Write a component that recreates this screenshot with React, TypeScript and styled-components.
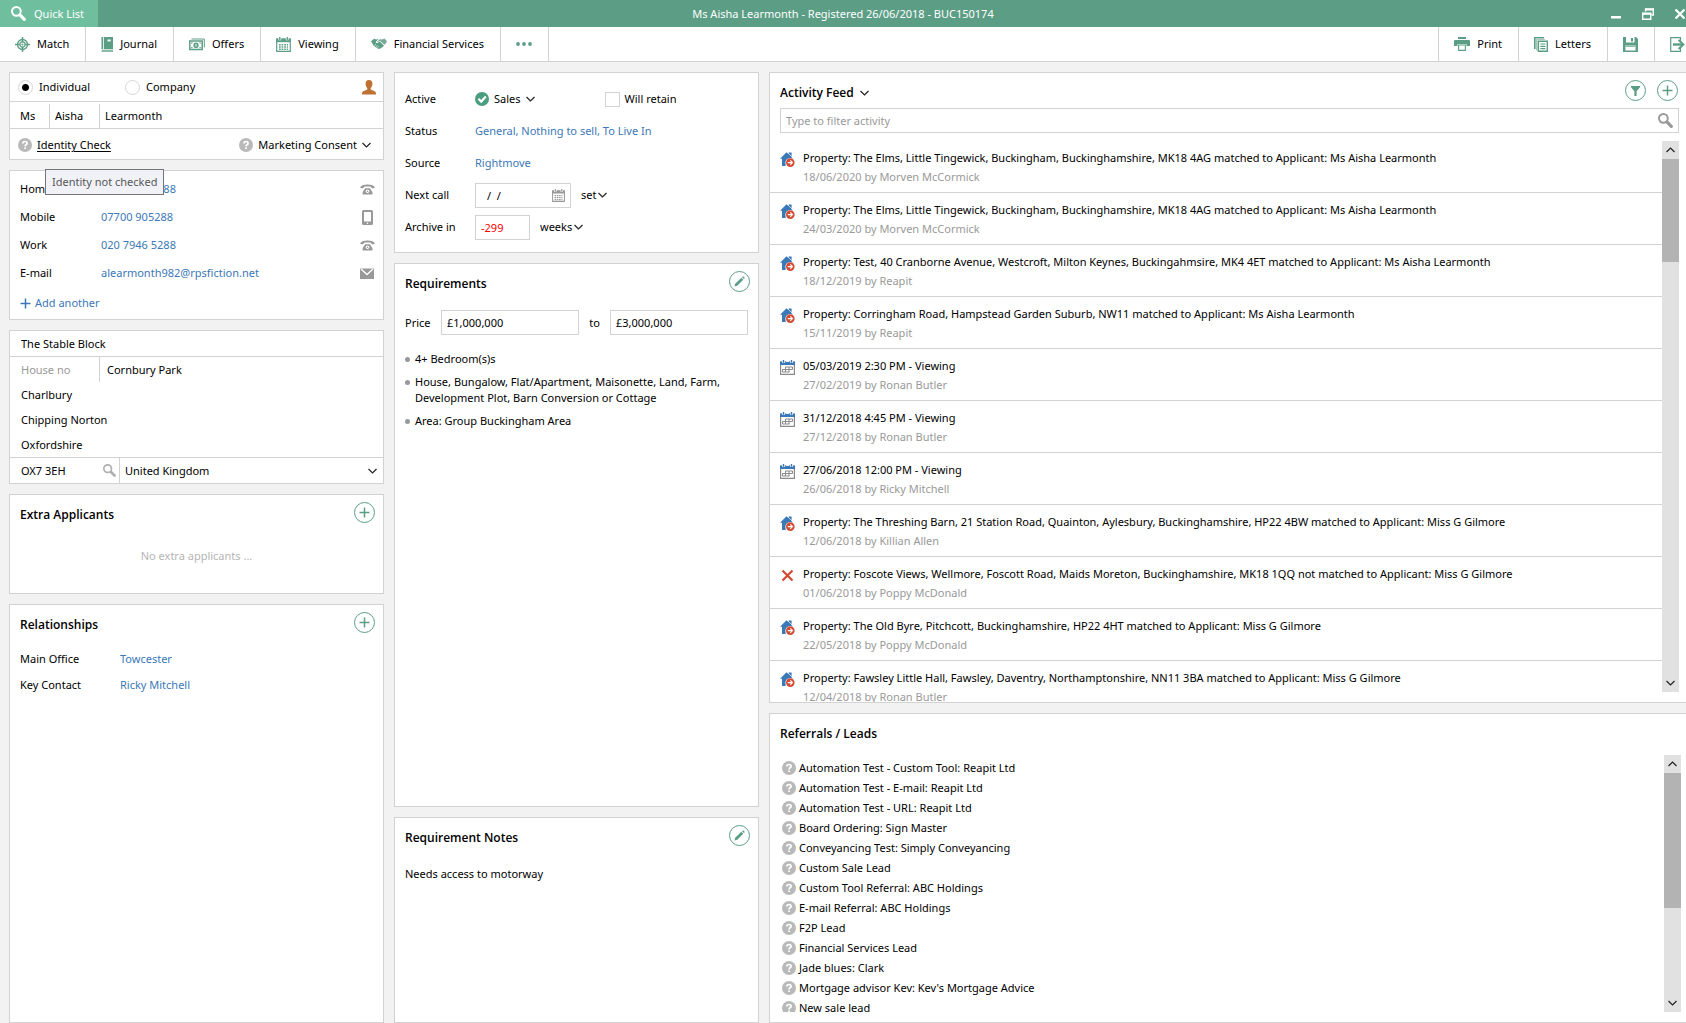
import React, { useRef } from 'react';
import styled, { createGlobalStyle, css } from 'styled-components';

const green = '#5c9e85';
const line = '#d2d2d2';
const blue = '#3b78b8';
const grey = '#999999';

const GlobalStyle = createGlobalStyle`
  *, *::before, *::after { box-sizing: border-box; }
  body {
    margin: 0;
    background: #f2f2f2;
    color: #000;
    font-family: "Noto Sans", "Open Sans", sans-serif;
    font-size: 11px;
    line-height: 16px;
  }
  button, input, select { font: inherit; color: inherit; }
  svg { display: block; flex: none; }
`;

/* ---------- page frame ---------- */

const Page = styled.div`
  display: flex;
  flex-direction: column;
  height: 100vh;
  overflow: hidden;
`;

const plainButton = css`
  display: inline-flex;
  align-items: center;
  margin: 0;
  padding: 0;
  border: 0;
  background: none;
  cursor: pointer;
`;

const TitleBar = styled.header`
  display: grid;
  grid-template-columns: 1fr auto 1fr;
  align-items: center;
  flex: none;
  height: 27px;
  background: ${green};
  color: #fff;
`;

const QuickList = styled.button`
  ${plainButton}
  justify-self: start;
  gap: 8px;
  height: 27px;
  padding: 0 14px 0 11px;
  background: #6fbf9f;
`;

const WindowTitle = styled.h1`
  margin: 0;
  font-size: 11px;
  font-weight: 400;
`;

const WindowControls = styled.div`
  display: flex;
  justify-content: flex-end;
  gap: 20px;
`;

const WindowButton = styled.button`
  ${plainButton}
`;

const Toolbar = styled.nav`
  display: flex;
  flex: none;
  height: 35px;
  background: #fff;
  border-bottom: 1px solid ${line};
`;

const ToolButton = styled.button`
  ${plainButton}
  gap: 7px;
  padding: 0 16px 0 15px;
  border-right: 1px solid ${line};
  white-space: nowrap;
`;

const ToolbarEnd = styled.div`
  display: flex;
  margin-left: auto;
  border-left: 1px solid ${line};
`;

const ExitButton = styled.button`
  ${plainButton}
  padding-left: 15px;
`;

const Columns = styled.main`
  display: grid;
  grid-template-columns: minmax(300px, 375fr) minmax(300px, 365fr) minmax(0, 917fr);
  gap: 10px;
  flex: 1;
  min-height: 0;
  padding: 10px 0 0 9px;
`;

const Column = styled.div`
  display: flex;
  flex-direction: column;
  gap: 10px;
  min-width: 0;
  min-height: 0;
`;

const Panel = styled.section<{ $grow?: number; $open?: boolean }>`
  display: flex;
  flex-direction: column;
  flex: ${p => (p.$grow ? `${p.$grow} 1 0` : 'none')};
  min-height: 0;
  position: relative;
  background: #fff;
  border: 1px solid ${line};
  border-right-width: ${p => (p.$open ? 0 : 1)}px;
`;

const PanelHead = styled.div`
  display: flex;
  align-items: center;
  gap: 11px;
  flex: none;
  height: 35px;
  padding: 0 8px 0 10px;
`;

const PanelTitle = styled.h2`
  display: flex;
  align-items: center;
  gap: 6px;
  margin: 0 auto 0 0;
  padding-top: 4px;
  font-family: "Open Sans", "Noto Sans", sans-serif;
  font-size: 12px;
  font-weight: 600;
`;

const RoundButton = styled.button`
  ${plainButton}
  justify-content: center;
  width: 21px;
  height: 21px;
  border: 1px solid ${green};
  border-radius: 50%;
  color: ${green};
`;

const Link = styled.a`
  color: ${blue};
  text-decoration: none;
`;

/* ---------- applicant ---------- */

const KindRow = styled.div`
  display: flex;
  align-items: center;
  height: 29px;
  padding: 0 7px 0 8px;
  border-bottom: 1px solid ${line};
`;

const Radio = styled.label`
  display: flex;
  align-items: center;
  gap: 6px;
  width: 107px;
  input {
    appearance: none;
    width: 15px;
    height: 15px;
    margin: 0;
    border: 1px solid #d6d6d6;
    border-radius: 50%;
    background: #fff;
  }
  input:checked { background: radial-gradient(circle, #000 3px, #fff 4px); }
`;

const Fill = styled.span`
  flex: 1;
`;

const NameRow = styled.div`
  display: flex;
  height: 27px;
  padding-top: 2px;
  border-bottom: 1px solid ${line};
  input { padding-bottom: 2px; }
`;

const BareInput = styled.input<{ $w?: number; $rule?: boolean; $pad?: number }>`
  ${p => (p.$w ? `width: ${p.$w}px;` : 'flex: 1;')}
  min-width: 0;
  height: 100%;
  padding: 0 5px 0 ${p => p.$pad ?? 5}px;
  border: 0;
  border-right: ${p => (p.$rule ? `1px solid ${line}` : '0')};
  background: none;
  outline: 0;
  &::placeholder { color: ${grey}; opacity: 1; }
`;

const CheckRow = styled.div`
  display: flex;
  align-items: center;
  justify-content: space-between;
  height: 30px;
  padding: 2px 12px 0 8px;
`;

const InlineButton = styled.button<{ $under?: boolean; $tight?: boolean }>`
  ${plainButton}
  gap: ${p => (p.$tight ? 2 : 5)}px;
  span { text-decoration: ${p => (p.$under ? 'underline' : 'none')}; text-underline-offset: 2px; }
`;

const Tooltip = styled.div`
  position: absolute;
  z-index: 2;
  left: 35px;
  top: 96px;
  height: 26px;
  padding: 4px 6px;
  border: 1px solid #767676;
  background: #f1f2f7;
  color: #575757;
  white-space: nowrap;
`;

const ContactList = styled.div`
  display: flex;
  flex-direction: column;
  padding: 4px 8px 0 10px;
`;

const ContactRow = styled.div`
  display: grid;
  grid-template-columns: 81px 1fr auto;
  align-items: center;
  height: 28px;
`;

const AddAnother = styled.button`
  ${plainButton}
  gap: 4px;
  height: 32px;
  color: ${blue};
`;

/* ---------- address ---------- */

const AddressLine = styled.div<{ $top?: boolean; $bottom?: boolean }>`
  display: flex;
  align-items: center;
  box-sizing: content-box;
  height: 25px;
  border-top: ${p => (p.$top ? `1px solid ${line}` : '0')};
  border-bottom: ${p => (p.$bottom ? `1px solid ${line}` : '0')};
`;

const Postcode = styled.div`
  display: flex;
  align-items: center;
  width: 110px;
  height: 100%;
  padding-right: 3px;
  border-right: 1px solid ${line};
`;

const SelectBox = styled.div`
  display: flex;
  align-items: center;
  flex: 1;
  padding-right: 6px;
  select {
    appearance: none;
    flex: 1;
    padding: 0 5px;
    border: 0;
    background: none;
    outline: 0;
  }
`;

const Empty = styled.p`
  margin: 0;
  padding: 18px 0 29px;
  text-align: center;
  color: #b5b5b5;
`;

const Pairs = styled.dl`
  display: grid;
  grid-template-columns: 100px 1fr;
  row-gap: 10px;
  margin: 0;
  padding: 11px 10px;
  dd { margin: 0; }
`;

/* ---------- status form ---------- */

const Form = styled.div`
  display: flex;
  flex-direction: column;
  padding: 10px 10px 9px;
`;

const FormRow = styled.div`
  display: grid;
  grid-template-columns: 70px auto 1fr;
  align-items: center;
  height: 32px;
`;

const FormTail = styled.div<{ $gap: number }>`
  padding-left: ${p => p.$gap}px;
`;

const boxed = css`
  height: 25px;
  border: 1px solid ${line};
  background: #fff;
`;

const DateBox = styled.div`
  ${boxed}
  display: flex;
  align-items: center;
  width: 96px;
  padding-right: 5px;
`;

const BoxInput = styled.input<{ $w?: number; $alert?: boolean }>`
  ${boxed}
  ${p => (p.$w ? `width: ${p.$w}px;` : 'flex: 1;')}
  min-width: 0;
  padding: 0 5px;
  outline: 0;
  color: ${p => (p.$alert ? '#ff0000' : 'inherit')};
`;

const Tick = styled.label`
  display: flex;
  align-items: center;
  gap: 5px;
  input {
    appearance: none;
    width: 15px;
    height: 15px;
    margin: 0;
    border: 1px solid ${line};
    background: #fff;
  }
`;

const PriceRow = styled.div`
  display: flex;
  align-items: center;
  gap: 10px;
  padding: 11px 10px 0;
  label { width: 26px; }
  label + input + span { width: 11px; text-align: center; }
`;

const Bullets = styled.ul`
  display: flex;
  flex-direction: column;
  gap: 7px;
  margin: 0;
  padding: 16px 10px;
  list-style: none;
  li { position: relative; padding-left: 10px; }
  li::before {
    content: "";
    position: absolute;
    left: 0;
    top: 6px;
    width: 5px;
    height: 5px;
    border-radius: 50%;
    background: ${grey};
  }
`;

const Note = styled.p`
  margin: 0;
  padding: 13px 10px;
`;

/* ---------- feed ---------- */

const FilterBox = styled.div`
  ${boxed}
  display: flex;
  flex: none;
  align-items: center;
  margin: 0 7px 0 10px;
  padding-right: 5px;
`;

const ScrollArea = styled.div<{ $top: number; $right: number; $bottom: number }>`
  display: flex;
  flex: 1;
  min-height: 0;
  padding: ${p => p.$top}px ${p => p.$right}px ${p => p.$bottom}px 0;
`;

const Feed = styled.ul<{ $inset?: number }>`
  flex: 1;
  min-width: 0;
  margin: 0;
  padding: ${p => p.$inset ?? 0}px 0 0;
  overflow: hidden;
  list-style: none;
`;

const FeedItem = styled.li`
  display: flex;
  gap: 8px;
  height: 52px;
  padding: 9px 0 0 10px;
  border-bottom: 1px solid ${line};
  svg { margin-top: 2px; }
`;

const FeedText = styled.div`
  display: flex;
  flex-direction: column;
  gap: 3px;
  white-space: nowrap;
  small { font-size: 11px; color: ${grey}; }
`;

const LeadItem = styled.li`
  display: flex;
  align-items: center;
  gap: 3px;
  height: 20px;
  padding-left: 12px;
`;

const Bar = styled.div<{ $lift?: boolean }>`
  display: flex;
  flex-direction: column;
  flex: none;
  width: 17px;
  margin-bottom: ${p => (p.$lift ? 10 : 0)}px;
  background: #e1e1e1;
`;

const BarButton = styled.button`
  ${plainButton}
  justify-content: center;
  flex: none;
  height: 18px;
`;

const Track = styled.div`
  flex: 1;
  min-height: 0;
`;

const Thumb = styled.div<{ $share: number }>`
  height: ${p => p.$share}%;
  background: #b3b3b3;
`;

/* ---------- icons ---------- */

const Chevron = ({ up = false, color = '#222' }: { up?: boolean; color?: string }) => (
  <svg width="9" height="6" viewBox="0 0 9 6" fill="none" stroke={color} strokeWidth="1.2">
    <path d={up ? 'M0.5 5 L4.5 1 L8.5 5' : 'M0.5 1 L4.5 5 L8.5 1'} />
  </svg>
);

const SearchIcon = ({ size = 14, color = grey }: { size?: number; color?: string }) => (
  <svg width={size} height={size} viewBox="0 0 14 14" fill="none" stroke={color}>
    <circle cx="5" cy="5" r="4.1" strokeWidth="1.8" />
    <path d="M8.6 8.6 L12.4 12.4" strokeWidth="3" strokeLinecap="round" />
  </svg>
);

const MatchIcon = () => (
  <svg width="15" height="15" viewBox="0 0 15 15" fill="none" stroke={green}>
    <circle cx="7.5" cy="7.5" r="5" strokeWidth="1.3" />
    <circle cx="7.5" cy="7.5" r="2.6" strokeWidth="1.1" />
    <path d="M7.5 0V5.2M7.5 9.8V15M0 7.5H5.2M9.8 7.5H15" strokeWidth="1.5" />
    <circle cx="7.5" cy="7.5" r="1" fill={green} stroke="none" />
  </svg>
);

const JournalIcon = () => (
  <svg width="12" height="15" viewBox="0 0 12 15">
    <path d="M0.5 0H2V12H0.5z" fill={green} />
    <path d="M2.8 0H12V12H2.8z" fill={green} />
    <path d="M6.5 2.5H9.7V4.4H6.5z" fill="#fff" />
    <path d="M0.5 12.6H12V15H0.5z" fill="#8dbca9" />
  </svg>
);

const OffersIcon = () => (
  <svg width="16" height="13" viewBox="0 0 16 13" fill="none" stroke={green}>
    <path d="M2.5 1H15.3V9.5" strokeWidth="1" />
    <path d="M0.8 3H13.2V11.6H0.8z" strokeWidth="1.5" />
    <ellipse cx="7" cy="7.3" rx="2.6" ry="2.8" fill={green} stroke="none" />
    <path d="M2.6 5.6V4.8H3.6M10.4 4.8H11.4V5.6M2.6 9V9.8H3.6M10.4 9.8H11.4V9" />
    <path d="M7 6V8.6" stroke="#fff" />
  </svg>
);

const CalendarIcon = ({ head = green, frame = green, dots = green, size = 15 }:
  { head?: string; frame?: string; dots?: string; size?: number }) => (
  <svg width={size} height={size} viewBox="0 0 15 15" fill="none">
    <path d="M0.7 2.2H14.3V14.3H0.7z" stroke={frame} strokeWidth="1.2" fill="#fff" />
    <path d="M0.2 1.6H14.8V5.2H0.2z" fill={head} />
    <path d="M3.8 0V3.2M11.2 0V3.2" stroke="#fff" strokeWidth="2.8" />
    <path d="M3.8 0V3M11.2 0V3" stroke={head} strokeWidth="1.4" />
    <path d="M3 7.7H12M3 10H12M3 12.3H12" stroke={dots} strokeWidth="1.4" strokeDasharray="1.7 0.9" />
  </svg>
);

const DiaryIcon = () => (
  <svg width="15" height="15" viewBox="0 0 15 15" fill="none">
    <path d="M0.6 4V14.4H14.4V4" stroke="#8a8a8a" strokeWidth="1.2" />
    <path d="M0 1.4H15V5H0z" fill={blue} />
    <path d="M3.500 0V3M7.500 0V2M11.500 0V3" stroke="#fff" strokeWidth="2.600" />
    <path d="M3.500 0V2.800M11.500 0V2.800" stroke={blue} strokeWidth="1.300" />
    <path d="M5.500 7H12.500M2.500 9.500H12.500M2.500 12H9.500M5.500 7V12M9 7V12M12.500 7V9.500M2.500 9.500V12" stroke="#8a8a8a" />
  </svg>
);

const HandshakeIcon = () => (
  <svg width="16" height="12" viewBox="0 0 16 12">
    <path d="M0 3.2 L3 0.8 L5.2 1.6 L7.4 1 L4.6 4.2 Q5.6 5.6 7.4 4.4 L8.8 3.6 L12.8 7.4 Q13 8.6 11.8 8.6 Q11.6 9.8 10.4 9.6 Q10 10.8 8.8 10.4 Q7.8 11.4 6.8 10.6 L2.6 7.8 L1.8 6.2z" fill={green} />
    <path d="M6 4 L8.8 1.2 L11 1.4 L13.4 0.6 L16 3.2 L14.6 5.8 L13.4 6.8 L9 2.8 L7 4.2z" fill="#74ab97" />
    <path d="M3.4 7.4 L5 6.4M4.8 8.8 L6.4 7.6M6.4 9.8 L7.8 8.6" stroke="#fff" strokeWidth="0.7" />
  </svg>
);

const DotsIcon = () => (
  <svg width="16" height="4" viewBox="0 0 16 4" fill={green}>
    <circle cx="2" cy="2" r="1.9" /><circle cx="8" cy="2" r="1.9" /><circle cx="14" cy="2" r="1.9" />
  </svg>
);

const PrintIcon = () => (
  <svg width="16" height="14" viewBox="0 0 16 14">
    <path d="M4 0H12V2H4zM1 3H15Q16 3 16 4V9H12.5V7H3.5V9H0V4Q0 3 1 3z" fill={green} />
    <path d="M4.6 8H11.4V13.4H4.6z" fill="#fff" stroke={green} strokeWidth="1.1" />
  </svg>
);

const LettersIcon = () => (
  <svg width="14" height="15" viewBox="0 0 14 15">
    <path d="M0 0H10V1.6H1.6V12H0z" fill={green} />
    <path d="M2.2 2.2H11V3H3.4V13.4H2.2z" fill="#8dbca9" />
    <path d="M4.4 4.2H13.3V14.3H4.4z" fill="#fff" stroke={green} strokeWidth="1.4" />
    <path d="M6.4 7H11.4M6.4 9.3H11.4M6.4 11.6H11.4" stroke={green} strokeWidth="1.2" />
  </svg>
);

const SaveIcon = () => (
  <svg width="15" height="15" viewBox="0 0 15 15">
    <path d="M0 0H13L15 2V15H0z" fill={green} />
    <path d="M3 0H11.5V5.4H3zM2.4 8.6H12.6V13.6H2.4z" fill="#fff" />
    <path d="M8 1H10V4.4H8z" fill={green} />
    <path d="M2.4 8.6H12.6V10H2.4z" fill="#8dbca9" />
  </svg>
);

const ExitIcon = () => (
  <svg width="16" height="15" viewBox="0 0 16 15" fill="none" stroke={green}>
    <path d="M10.5 4V0.7H0.7V14.3H10.5V11" strokeWidth="1.2" />
    <path d="M3 7.5H12" strokeWidth="2.4" />
    <path d="M8.6 3 L13.4 7.5 L8.6 12" strokeWidth="2" />
  </svg>
);

const QuestionIcon = () => (
  <svg width="14" height="14" viewBox="0 0 14 14" fill="none">
    <circle cx="7" cy="7" r="7" fill="#b9b9b9" />
    <path d="M4.9 5.4 Q4.9 3.5 7 3.5 Q9.1 3.5 9.1 5.2 Q9.1 6.3 8 6.8 Q7.1 7.3 7.1 8.4" stroke="#fff" strokeWidth="1.7" />
    <path d="M6.2 9.4H8V11H6.2z" fill="#fff" />
  </svg>
);

const PersonIcon = () => (
  <svg width="14" height="15" viewBox="0 0 14 15" fill="#bf7033">
    <path d="M7 0C9.2 0 10.6 1.6 10.4 4C10.3 6 9.4 7.4 8.7 8V9.4C10 10.4 14 10.4 14 13.4V14.4H0V13.4C0 10.4 4 10.4 5.3 9.4V8C4.6 7.4 3.7 6 3.6 4C3.4 1.6 4.8 0 7 0z" />
  </svg>
);

const PhoneIcon = () => (
  <svg width="15" height="11" viewBox="0 0 15 11">
    <path d="M0 3.6Q1.5 0.4 7.5 0.4Q13.5 0.4 15 3.6L12.6 4.4L10.6 3V2.5H4.4V3L2.4 4.4z" fill={grey} />
    <path d="M5.2 4.2H9.8L12.4 8V10.4H2.6V8z" fill={grey} />
    <circle cx="7.5" cy="7.2" r="1.8" fill="#fff" />
    <circle cx="7.5" cy="7.2" r="0.8" fill={grey} />
  </svg>
);

const MobileIcon = () => (
  <svg width="15" height="15" viewBox="0 0 15 15">
    <rect x="2" y="0" width="11" height="15" rx="1.5" fill={grey} />
    <path d="M4 2H11V11.5H4z" fill="#fff" />
    <circle cx="7.5" cy="13.2" r="0.8" fill="#fff" />
  </svg>
);

const MailIcon = () => (
  <svg width="15" height="11" viewBox="0 0 15 11">
    <path d="M0 0.5H14V11H0z" fill={grey} />
    <path d="M1 1 L7 6.6 L13 1" fill="none" stroke="#fff" strokeWidth="1.3" />
  </svg>
);

const PlusIcon = ({ color = green }: { color?: string }) => (
  <svg width="11" height="11" viewBox="0 0 11 11" stroke={color} strokeWidth="1.5">
    <path d="M5.5 0.5V10.5M0.5 5.5H10.5" />
  </svg>
);

const PencilIcon = () => (
  <svg width="11" height="11" viewBox="0 0 11 11" fill={green}>
    <path d="M0.5 10.5 L1.2 7.8 L7.4 1.8 L9.3 3.7 L3.2 9.8z" />
    <path d="M8 1.2 L8.8 0.5 Q9.3 0.3 9.7 0.7 L10.4 1.4 Q10.8 1.9 10.5 2.4 L9.9 3.1z" />
  </svg>
);

const FunnelIcon = () => (
  <svg width="9" height="10" viewBox="0 0 9 10" fill={green}>
    <path d="M0 0H9V1.2L5.6 5.2V10H3.4V5.2L0 1.2z" />
  </svg>
);

const CheckIcon = () => (
  <svg width="14" height="14" viewBox="0 0 14 14">
    <circle cx="7" cy="7" r="7" fill="#4a9d7d" />
    <path d="M3.4 6.8 L6.2 9.6 L10.8 4.6" fill="none" stroke="#fff" strokeWidth="2.2" />
  </svg>
);

const HouseIcon = () => (
  <svg width="15" height="16" viewBox="0 0 15 16">
    <path d="M0 6.8 L6.5 0.2 L8.6 2.2V0.6H11.6V5.2L13 6.8H11V14H7.8V9.5H5.6V14H2V6.8z" fill={blue} />
    <path d="M8.2 1.2L11.8 4.8" stroke="#fff" strokeWidth="0.7" />
    <circle cx="10.3" cy="10.6" r="4.700" fill="#fff" />
    <circle cx="10.3" cy="10.6" r="4.300" fill="#d24a32" />
    <path d="M7.8 10.6H12.2M10.3 8.4 L12.4 10.6 L10.3 12.8" fill="none" stroke="#fff" strokeWidth="1.2" />
  </svg>
);

const CrossIcon = () => (
  <svg width="15" height="15" viewBox="0 0 15 15" stroke="#d24a32" strokeWidth="2.2">
    <path d="M2.5 2.5 L12.5 12.5M12.5 2.5 L2.5 12.5" />
  </svg>
);

/* ---------- data ---------- */

type Kind = 'match' | 'viewing' | 'reject';

const feed: { kind: Kind; text: string; by: string }[] = [
  { kind: 'match', text: 'Property: The Elms, Little Tingewick, Buckingham, Buckinghamshire, MK18 4AG matched to Applicant: Ms Aisha Learmonth', by: '18/06/2020 by Morven McCormick' },
  { kind: 'match', text: 'Property: The Elms, Little Tingewick, Buckingham, Buckinghamshire, MK18 4AG matched to Applicant: Ms Aisha Learmonth', by: '24/03/2020 by Morven McCormick' },
  { kind: 'match', text: 'Property: Test, 40 Cranborne Avenue, Westcroft, Milton Keynes, Buckingahmsire, MK4 4ET matched to Applicant: Ms Aisha Learmonth', by: '18/12/2019 by Reapit' },
  { kind: 'match', text: 'Property: Corringham Road, Hampstead Garden Suburb, NW11 matched to Applicant: Ms Aisha Learmonth', by: '15/11/2019 by Reapit' },
  { kind: 'viewing', text: '05/03/2019 2:30 PM - Viewing', by: '27/02/2019 by Ronan Butler' },
  { kind: 'viewing', text: '31/12/2018 4:45 PM - Viewing', by: '27/12/2018 by Ronan Butler' },
  { kind: 'viewing', text: '27/06/2018 12:00 PM - Viewing', by: '26/06/2018 by Ricky Mitchell' },
  { kind: 'match', text: 'Property: The Threshing Barn, 21 Station Road, Quainton, Aylesbury, Buckinghamshire, HP22 4BW matched to Applicant: Miss G Gilmore', by: '12/06/2018 by Killian Allen' },
  { kind: 'reject', text: 'Property: Foscote Views, Wellmore, Foscott Road, Maids Moreton, Buckinghamshire, MK18 1QQ not matched to Applicant: Miss G Gilmore', by: '01/06/2018 by Poppy McDonald' },
  { kind: 'match', text: 'Property: The Old Byre, Pitchcott, Buckinghamshire, HP22 4HT matched to Applicant: Miss G Gilmore', by: '22/05/2018 by Poppy McDonald' },
  { kind: 'match', text: 'Property: Fawsley Little Hall, Fawsley, Daventry, Northamptonshire, NN11 3BA matched to Applicant: Miss G Gilmore', by: '12/04/2018 by Ronan Butler' },
];

const leads = [
  'Automation Test - Custom Tool: Reapit Ltd',
  'Automation Test - E-mail: Reapit Ltd',
  'Automation Test - URL: Reapit Ltd',
  'Board Ordering: Sign Master',
  'Conveyancing Test: Simply Conveyancing',
  'Custom Sale Lead',
  'Custom Tool Referral: ABC Holdings',
  'E-mail Referral: ABC Holdings',
  'F2P Lead',
  'Financial Services Lead',
  'Jade blues: Clark',
  "Mortgage advisor Kev: Kev's Mortgage Advice",
  'New sale lead',
];

const contacts = [
  { label: 'Home', value: '020 7946 5288', href: 'tel:02079465288', icon: <PhoneIcon /> },
  { label: 'Mobile', value: '07700 905288', href: 'tel:07700905288', icon: <MobileIcon /> },
  { label: 'Work', value: '020 7946 5288', href: 'tel:02079465288', icon: <PhoneIcon /> },
  { label: 'E-mail', value: 'alearmonth982@rpsfiction.net', href: 'mailto:alearmonth982@rpsfiction.net', icon: <MailIcon /> },
];

const feedIcons: Record<Kind, React.ReactNode> = {
  match: <HouseIcon />,
  viewing: <DiaryIcon />,
  reject: <CrossIcon />,
};

function ScrollBar({ share, lift, onStep }: { share: number; lift?: boolean; onStep: (by: number) => void }) {
  return (
    <Bar $lift={lift}>
      <BarButton aria-label="Scroll up" onClick={() => onStep(-40)}><Chevron up /></BarButton>
      <Track><Thumb $share={share} /></Track>
      <BarButton aria-label="Scroll down" onClick={() => onStep(40)}><Chevron /></BarButton>
    </Bar>
  );
}

export default function App() {
  const feedRef = useRef<HTMLUListElement>(null);
  const leadsRef = useRef<HTMLUListElement>(null);

  return (
    <Page>
      <GlobalStyle />
      <TitleBar>
        <QuickList><SearchIcon size={15} color="#fff" /><span>Quick List</span></QuickList>
        <WindowTitle>Ms Aisha Learmonth - Registered 26/06/2018 - BUC150174</WindowTitle>
        <WindowControls>
          <WindowButton aria-label="Minimise">
            <svg width="12" height="12" viewBox="0 0 12 12"><path d="M1 8H11V10.5H1z" fill="#fff" /></svg>
          </WindowButton>
          <WindowButton aria-label="Restore">
            <svg width="12" height="12" viewBox="0 0 12 12" fill="none" stroke="#fff">
              <path d="M3.5 3.5V1.5H11.3V7H9.5" strokeWidth="1.4" />
              <path d="M3 1.3H12" strokeWidth="2.2" />
              <path d="M0.7 5.5H8.7V11.3H0.7z" strokeWidth="1.4" />
              <path d="M0 5.7H9.4" strokeWidth="2.2" />
            </svg>
          </WindowButton>
          <WindowButton aria-label="Close">
            <svg width="12" height="12" viewBox="0 0 12 12" stroke="#fff" strokeWidth="2.2">
              <path d="M1.5 1.5 L10.5 10.5M10.5 1.5 L1.5 10.5" />
            </svg>
          </WindowButton>
        </WindowControls>
      </TitleBar>

      <Toolbar aria-label="Applicant actions">
        <ToolButton><MatchIcon />Match</ToolButton>
        <ToolButton><JournalIcon />Journal</ToolButton>
        <ToolButton><OffersIcon />Offers</ToolButton>
        <ToolButton><CalendarIcon />Viewing</ToolButton>
        <ToolButton><HandshakeIcon />Financial Services</ToolButton>
        <ToolButton aria-label="More"><DotsIcon /></ToolButton>
        <ToolbarEnd>
          <ToolButton><PrintIcon />Print</ToolButton>
          <ToolButton><LettersIcon />Letters</ToolButton>
          <ToolButton aria-label="Save"><SaveIcon /></ToolButton>
          <ExitButton aria-label="Save and close"><ExitIcon /></ExitButton>
        </ToolbarEnd>
      </Toolbar>

      <Columns>
        <Column>
          <Panel>
            <KindRow>
              <Radio><input type="radio" name="kind" defaultChecked />Individual</Radio>
              <Radio><input type="radio" name="kind" />Company</Radio>
              <Fill />
              <PersonIcon />
            </KindRow>
            <NameRow>
              <BareInput $pad={10} $w={40} $rule aria-label="Title" defaultValue="Ms" />
              <BareInput $w={50} $rule aria-label="First name" defaultValue="Aisha" />
              <BareInput aria-label="Surname" defaultValue="Learmonth" />
            </NameRow>
            <CheckRow>
              <InlineButton $under aria-describedby="identity-tip"><QuestionIcon /><span>Identity Check</span></InlineButton>
              <InlineButton><QuestionIcon /><span>Marketing Consent</span><Chevron /></InlineButton>
            </CheckRow>
            <Tooltip id="identity-tip" role="tooltip">Identity not checked</Tooltip>
          </Panel>

          <Panel>
            <ContactList>
              {contacts.map(c => (
                <ContactRow key={c.label}>
                  <span>{c.label}</span>
                  <span><Link href={c.href}>{c.value}</Link></span>
                  {c.icon}
                </ContactRow>
              ))}
              <AddAnother><PlusIcon color={blue} />Add another</AddAnother>
            </ContactList>
          </Panel>

          <Panel>
            <AddressLine><BareInput $pad={11} aria-label="Building name" defaultValue="The Stable Block" /></AddressLine>
            <AddressLine $top>
              <BareInput $pad={11} $w={90} $rule aria-label="House number" placeholder="House no" />
              <BareInput $pad={7} aria-label="Street" defaultValue="Cornbury Park" />
            </AddressLine>
            <AddressLine><BareInput $pad={11} aria-label="Address line 2" defaultValue="Charlbury" /></AddressLine>
            <AddressLine><BareInput $pad={11} aria-label="Town" defaultValue="Chipping Norton" /></AddressLine>
            <AddressLine $bottom><BareInput $pad={11} aria-label="County" defaultValue="Oxfordshire" /></AddressLine>
            <AddressLine>
              <Postcode>
                <BareInput $pad={11} aria-label="Postcode" defaultValue="OX7 3EH" />
                <SearchIcon size={13} color="#b0b0b0" />
              </Postcode>
              <SelectBox>
                <select aria-label="Country"><option>United Kingdom</option></select>
                <Chevron />
              </SelectBox>
            </AddressLine>
          </Panel>

          <Panel>
            <PanelHead>
              <PanelTitle>Extra Applicants</PanelTitle>
              <RoundButton aria-label="Add applicant"><PlusIcon /></RoundButton>
            </PanelHead>
            <Empty>No extra applicants ...</Empty>
          </Panel>

          <Panel $grow={1}>
            <PanelHead>
              <PanelTitle>Relationships</PanelTitle>
              <RoundButton aria-label="Add relationship"><PlusIcon /></RoundButton>
            </PanelHead>
            <Pairs>
              <dt>Main Office</dt><dd><Link href="#office">Towcester</Link></dd>
              <dt>Key Contact</dt><dd><Link href="#contact">Ricky Mitchell</Link></dd>
            </Pairs>
          </Panel>
        </Column>

        <Column>
          <Panel>
            <Form>
              <FormRow>
                <span>Active</span>
                <InlineButton><CheckIcon /><span>Sales</span><Chevron /></InlineButton>
                <FormTail $gap={70}><Tick><input type="checkbox" />Will retain</Tick></FormTail>
              </FormRow>
              <FormRow>
                <span>Status</span>
                <Link href="#status">General, Nothing to sell, To Live In</Link>
              </FormRow>
              <FormRow>
                <span>Source</span>
                <Link href="#source">Rightmove</Link>
              </FormRow>
              <FormRow>
                <label htmlFor="next-call">Next call</label>
                <DateBox><BareInput $pad={11} id="next-call" defaultValue="/  /" /><CalendarIcon head={grey} frame={grey} dots={grey} size={13} /></DateBox>
                <FormTail $gap={10}><InlineButton $tight><span>set</span><Chevron /></InlineButton></FormTail>
              </FormRow>
              <FormRow>
                <label htmlFor="archive">Archive in</label>
                <BoxInput id="archive" $w={55} $alert defaultValue="-299" />
                <FormTail $gap={10}><InlineButton $tight><span>weeks</span><Chevron /></InlineButton></FormTail>
              </FormRow>
            </Form>
          </Panel>

          <Panel $grow={545}>
            <PanelHead>
              <PanelTitle>Requirements</PanelTitle>
              <RoundButton aria-label="Edit requirements"><PencilIcon /></RoundButton>
            </PanelHead>
            <PriceRow>
              <label htmlFor="price-from">Price</label>
              <BoxInput id="price-from" defaultValue="£1,000,000" />
              <span>to</span>
              <BoxInput aria-label="Price to" defaultValue="£3,000,000" />
            </PriceRow>
            <Bullets>
              <li>4+ Bedroom(s)s</li>
              <li>House, Bungalow, Flat/Apartment, Maisonette, Land, Farm, Development Plot, Barn Conversion or Cottage</li>
              <li>Area: Group Buckingham Area</li>
            </Bullets>
          </Panel>

          <Panel $grow={205}>
            <PanelHead>
              <PanelTitle>Requirement Notes</PanelTitle>
              <RoundButton aria-label="Edit notes"><PencilIcon /></RoundButton>
            </PanelHead>
            <Note>Needs access to motorway</Note>
          </Panel>
        </Column>

        <Column>
          <Panel $grow={632} $open>
            <PanelHead>
              <PanelTitle>Activity Feed <Chevron /></PanelTitle>
              <RoundButton aria-label="Filter"><FunnelIcon /></RoundButton>
              <RoundButton aria-label="Add activity"><PlusIcon /></RoundButton>
            </PanelHead>
            <FilterBox>
              <BareInput aria-label="Filter activity" placeholder="Type to filter activity" />
              <SearchIcon size={15} />
            </FilterBox>
            <ScrollArea $top={8} $right={7} $bottom={0}>
              <Feed ref={feedRef}>
                {feed.map((f, i) => (
                  <FeedItem key={i}>
                    {feedIcons[f.kind]}
                    <FeedText><span>{f.text}</span><small>{f.by}</small></FeedText>
                  </FeedItem>
                ))}
              </Feed>
              <ScrollBar share={20} lift onStep={by => feedRef.current?.scrollBy(0, by)} />
            </ScrollArea>
          </Panel>

          <Panel $grow={309} $open>
            <PanelHead><PanelTitle>Referrals / Leads</PanelTitle></PanelHead>
            <ScrollArea $top={6} $right={5} $bottom={10}>
              <Feed ref={leadsRef} $inset={3}>
                {leads.map(l => (
                  <LeadItem key={l}><QuestionIcon />{l}</LeadItem>
                ))}
              </Feed>
              <ScrollBar share={61} onStep={by => leadsRef.current?.scrollBy(0, by)} />
            </ScrollArea>
          </Panel>
        </Column>
      </Columns>
    </Page>
  );
}
